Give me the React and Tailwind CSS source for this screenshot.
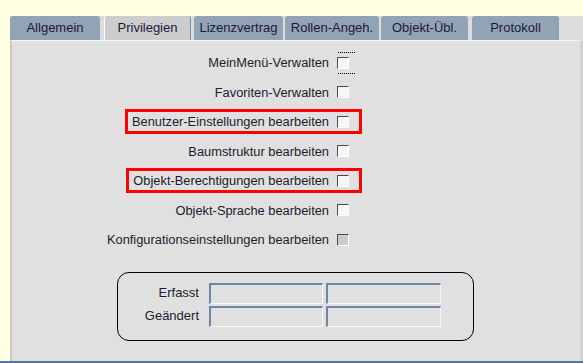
import React from "react";

const tabs = [
  { label: "Allgemein", w: "w-[90px]", ml: "ml-0" },
  { label: "Privilegien", w: "w-[87px]", ml: "ml-[4px]", active: true },
  { label: "Lizenzvertrag", w: "w-[89px]", ml: "ml-[3px]" },
  { label: "Rollen-Angeh.", w: "w-[94px]", ml: "ml-[2px]" },
  { label: "Objekt-Übl.", w: "w-[87px]", ml: "ml-[2px]" },
  { label: "Protokoll", w: "w-[87px]", ml: "ml-[4px]" },
];

const rows = [
  { label: "MeinMenü-Verwalten", focus: true },
  { label: "Favoriten-Verwalten" },
  { label: "Benutzer-Einstellungen bearbeiten", red: true },
  { label: "Baumstruktur bearbeiten" },
  { label: "Objekt-Berechtigungen bearbeiten", red: true },
  { label: "Objekt-Sprache bearbeiten" },
  { label: "Konfigurationseinstellungen bearbeiten", disabled: true },
];

function Checkbox({ focus, disabled }) {
  return (
    <span className="relative inline-block w-[12px] h-[12px] shrink-0">
      <span
        className={
          "block w-[12px] h-[12px] border-t border-l border-t-[#4a4a4a] border-l-[#4a4a4a] border-b border-r border-b-white border-r-white " +
          (disabled ? "bg-[#cacaca]" : "bg-[#f6f6f6]")
        }
      />
      {focus && (
        <span className="absolute left-[1px] -right-[6px] -top-[5px] -bottom-[5px] border-t border-b border-dotted border-black" />
      )}
    </span>
  );
}

function Field({ w }) {
  return (
    <div
      className={
        "h-[21px] border-t-2 border-l-2 border-t-[#6f85a5] border-l-[#6f85a5] border-b border-r border-b-[#f6f6f6] border-r-[#f6f6f6] bg-[#e0e0e0] " +
        w
      }
    />
  );
}

export default function App() {
  return (
    <div
      className="w-[583px] h-[363px] bg-[#ffffe1] flex flex-col text-[13px] text-[#1c1c2e]"
      style={{ fontFamily: '"Liberation Sans", Arial, sans-serif' }}
    >
      <div className="flex-1 pt-[16px] pl-[10px] flex flex-col min-h-0">
        <div className="flex-1 bg-[#e0e0e0] flex flex-col min-h-0">
          <div className="flex h-[24px] shrink-0 bg-[#dcdcdc]">
            {tabs.map((t) => (
              <div
                key={t.label}
                className={
                  "h-[24px] flex items-center justify-center rounded-t-[3px] text-[#1a1838] " +
                  t.w +
                  " " +
                  t.ml +
                  " " +
                  (t.active
                    ? "bg-[#cdcdcd] border-l border-l-white border-r border-r-[#7d8ea6]"
                    : "bg-[#93a3b6]")
                }
              >
                {t.label}
              </div>
            ))}
          </div>
          <div className="flex-1 border-t border-t-[#f4f4f4] border-l-2 border-l-[#c8c8c8] border-r-[3px] border-r-[#d2d2d2] bg-[#e0e0e0] pt-[7px] flex flex-col">
            {rows.map((r) => (
              <div key={r.label} className="w-[350px] h-[29.5px] flex items-center justify-end">
                <div
                  className={
                    "h-[25px] inline-flex items-center gap-[8px] pl-[4px] pr-[10px] border-[3px] " +
                    (r.red ? "border-[#ff0000]" : "border-transparent")
                  }
                >
                  <span className="whitespace-nowrap text-[12.85px]">{r.label}</span>
                  <Checkbox focus={r.focus} disabled={r.disabled} />
                </div>
              </div>
            ))}
            <div className="ml-[105px] mt-[17px] w-[357px] h-[69px] border border-black rounded-[12px] pt-[10px] flex flex-col gap-[2px]">
              <div className="flex items-center">
                <div className="w-[81px] text-right">Erfasst</div>
                <div className="ml-[10px]"><Field w="w-[114px]" /></div>
                <div className="ml-[3px]"><Field w="w-[115px]" /></div>
              </div>
              <div className="flex items-center">
                <div className="w-[81px] text-right">Geändert</div>
                <div className="ml-[10px]"><Field w="w-[114px]" /></div>
                <div className="ml-[3px]"><Field w="w-[115px]" /></div>
              </div>
            </div>
          </div>
        </div>
      </div>
      <div className="h-[2px] bg-[#5a7499] shrink-0" />
    </div>
  );
}
